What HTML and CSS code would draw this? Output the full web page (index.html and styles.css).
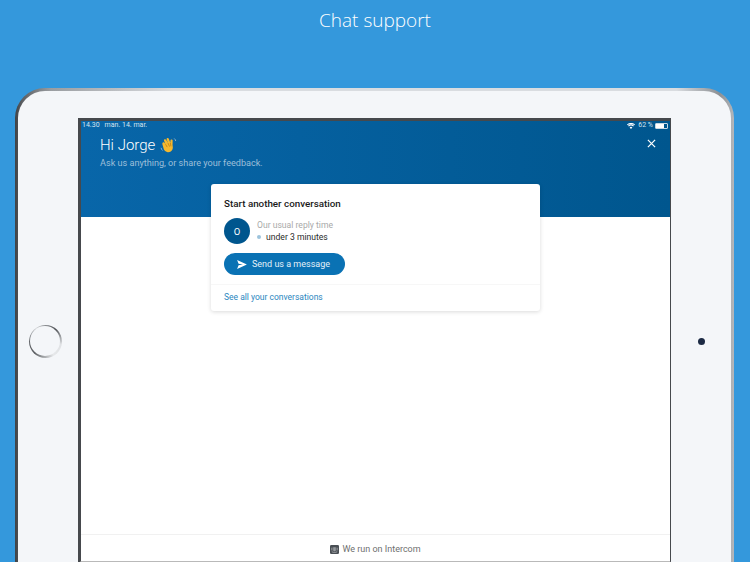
FILE: index.html
```html
<!DOCTYPE html>
<html lang="en">
<head>
    <meta charset="UTF-8">
    <meta name="viewport" content="width=device-width, initial-scale=1.0">
    <title>Chat support</title>
    <link rel="stylesheet" href="styles.css">
</head>
<body>

    <h1 class="page-title">Chat support</h1>

    <div class="device">
        <div class="bezel">
            <div class="side side-left"><div class="home-button"><div class="home-inner"></div></div></div>

            <div class="screen">
                <div class="hero">
                    <div class="status-bar">
                        <span class="status-time">14.30</span>
                        <span>man. 14. mar.</span>
                        <span class="status-right">
                            <svg class="wifi" viewBox="0 0 12 9"><path d="M6 9 3.900 6.600a3 3 0 0 1 4.200 0zM2.800 5.400 1.600 4.100a6.300 6.300 0 0 1 8.800 0L9.200 5.400a4.600 4.600 0 0 0-6.400 0zM.9 3.400 0 2.300a8.600 8.600 0 0 1 12 0l-.9 1.100a7.400 7.400 0 0 0-10.200 0z" fill="#fff"/></svg>
                            <span>62 %</span>
                            <span class="battery"><span class="battery-level"></span></span>
                        </span>
                    </div>
                    <div class="hero-row">
                        <div>
                            <div class="greeting">
                                Hi Jorge
                                <svg class="wave" viewBox="0 0 16 16">
                                    <path d="M2.600 5.200c.5-.5 1.300-.3 1.700.3l.9 1.300L3.900 3.700c-.3-.6-.1-1.200.4-1.500s1.200-.1 1.500.5l1.700 3L6.300 2.300c-.2-.6 0-1.200.6-1.400s1.200.1 1.400.7l1.400 3.700.1-1.700c0-.7.500-1.200 1.100-1.200s1.100.6 1 1.300l-.1 3.900c.1 1.400.6 2.500 0 3.900-.9 2.200-3.100 3.200-5.200 2.600-1.400-.4-2.300-1.400-3-2.600L2.300 7c-.3-.6-.2-1.300.3-1.800z" fill="#f5b82e"/>
                                    <path d="M5.200 6.800l1.600 2.700M7.500 5.700l1.500 3.300M9.700 5.400l.6 3.400" stroke="#b97a12" stroke-width=".7" fill="none"/>
                                    <path d="M13.400 1.400c.8.600 1.300 1.500 1.400 2.400M1 10.200c.2 1 .7 1.900 1.400 2.500" stroke="#b9c9d6" stroke-width=".7" fill="none"/>
                                </svg>
                            </div>
                            <div class="tagline">Ask us anything, or share your feedback.</div>
                        </div>
                        <svg class="close" viewBox="0 0 10 10"><path d="M1 1l8 8M9 1l-8 8" stroke="#fff" stroke-width="1.400"/></svg>
                    </div>
                </div>

                <div class="card">
                    <div class="card-main">
                        <div class="card-title">Start another conversation</div>
                        <div class="reply-row">
                            <div class="avatar">O</div>
                            <div>
                                <div class="reply-label">Our usual reply time</div>
                                <div class="reply-time"><span class="dot"></span>under 3 minutes</div>
                            </div>
                        </div>
                        <div class="send-button">
                            <svg class="send-icon" viewBox="0 0 12 11"><path d="M0 0l12 5.500L0 11l1.800-4.500 5.200-1-5.200-1z" fill="#fff"/></svg>
                            Send us a message
                        </div>
                    </div>
                    <div class="card-link">See all your conversations</div>
                </div>

                <div class="footer">
                    <svg class="intercom" viewBox="0 0 10 10">
                        <rect width="10" height="10" rx="1.500" fill="#4a4f55"/>
                        <path d="M2 3v3M3.700 2.500v4M5 2.500v4.500M6.300 2.500v4M8 3v3M2 7.500c1.800 1 4.200 1 6 0" stroke="#d8dadc" stroke-width=".6" fill="none"/>
                    </svg>
                    We run on Intercom
                </div>
            </div>

            <div class="side"><div class="camera"></div></div>
        </div>
    </div>

</body>
</html>
```

FILE: styles.css
```css
* {
    box-sizing: border-box;
}
html, body {
    height: 562px;
    overflow: hidden;
}
body {
    margin: 0;
    background-color: #3498dc;
    font-family: Roboto, "Liberation Sans", sans-serif;
}
.page-title {
    margin: 0;
    height: 88px;
    padding-top: 7px;
    text-align: center;
    color: white;
    font-family: "Open Sans", sans-serif;
    font-size: 19px;
    line-height: 27px;
    font-weight: 300;
}

/* tablet frame */
.device {
    margin: 0 16px 0 15px;
    padding: 3px;
    border-radius: 30px 30px 0 0;
    background: linear-gradient(to right, #3f4246 0, #5c5f63 1%, #9a9da1 5%, #d9dce0 22%, #d9dce0 92%, #8d9094 98%, #b4b7bb 100%);
}
.bezel {
    display: grid;
    grid-template-columns: 60px 593px 60px;
    padding-top: 27px;
    border-radius: 27px 27px 0 0;
    background-color: #f4f6f9;
}
.side {
    display: flex;
    align-items: center;
    justify-content: center;
}
.side-left {
    padding-right: 6px;
}
.home-button {
    width: 33px;
    height: 33px;
    padding: 1.500px;
    border-radius: 50%;
    background: conic-gradient(#8a8d91 0deg, #4f5256 40deg, #dfe1e4 100deg, #e6e8ea 150deg, #5a5d61 225deg, #63666a 270deg, #d6d8db 325deg, #8a8d91 360deg);
}
.home-inner {
    width: 100%;
    height: 100%;
    border-radius: 50%;
    background-color: #f4f6f9;
}
.camera {
    width: 7px;
    height: 7px;
    border-radius: 50%;
    background-color: #1c2a44;
}

/* app screen */
.screen {
    display: flex;
    flex-direction: column;
    height: 446px;
    border: 3px solid #46494d;
    border-right-width: 1px;
    border-bottom-color: #b9b9b9;
    background-color: white;
}
.hero {
    height: 96px;
    background: linear-gradient(to right, #0866a9, #00568e);
    color: white;
}
.status-bar {
    display: flex;
    align-items: center;
    gap: 5px;
    height: 7px;
    margin-top: 1px;
    padding: 0 2px 0 1px;
    font-size: 7px;
    line-height: 7px;
    color: #d5e3ee;
}
.status-right {
    display: flex;
    align-items: center;
    gap: 2px;
    margin-left: auto;
}
.wifi {
    width: 8px;
    height: 6px;
    margin-right: 1px;
}
.battery {
    display: block;
    width: 13px;
    height: 6px;
    border: 1px solid #c6d6e2;
    border-radius: 1px;
}
.battery-level {
    display: block;
    width: 8px;
    height: 100%;
    background-color: white;
}
.hero-row {
    display: flex;
    justify-content: space-between;
    align-items: flex-start;
    padding: 6px 14px 0 19px;
}
.greeting {
    display: flex;
    align-items: center;
    gap: 5px;
    height: 20px;
    font-size: 15px;
    font-weight: 300;
}
.wave {
    width: 17px;
    height: 17px;
}
.tagline {
    margin-top: 1px;
    font-size: 9.100px;
    line-height: 14px;
    color: #9dbfd9;
}
.close {
    width: 9px;
    height: 9px;
    margin-top: 4px;
}

.card {
    width: 329px;
    margin: -33px auto 0;
    border-radius: 3px;
    background-color: white;
    box-shadow: 0 1px 4px rgba(0, 0, 0, 0.15);
    position: relative;
}
.card-main {
    padding: 13px 13px 9px;
    border-bottom: 1px solid #f7f7f7;
}
.card-title {
    font-size: 9.800px;
    line-height: 13px;
    font-weight: 500;
    color: #1a1a1a;
}
.reply-row {
    display: flex;
    align-items: center;
    gap: 7px;
    margin-top: 8px;
}
.avatar {
    display: flex;
    align-items: center;
    justify-content: center;
    width: 26px;
    height: 26px;
    border-radius: 50%;
    background-color: #00568e;
    color: white;
    font-size: 9.500px;
}
.reply-label {
    font-size: 8.600px;
    line-height: 12px;
    color: #a9a9a9;
}
.reply-time {
    display: flex;
    align-items: center;
    gap: 5px;
    font-size: 8.600px;
    line-height: 12px;
    color: #2a2a2a;
}
.dot {
    width: 4px;
    height: 4px;
    border-radius: 50%;
    background-color: #9cc3dc;
}
.send-button {
    display: flex;
    align-items: center;
    gap: 5px;
    width: 121px;
    height: 22px;
    margin-top: 9px;
    padding-left: 13px;
    border-radius: 11px;
    background-color: #0a72b4;
    color: #e4f0f8;
    font-size: 9px;
}
.send-icon {
    width: 10px;
    height: 9px;
}
.card-link {
    padding: 0 13px;
    height: 26px;
    line-height: 24px;
    font-size: 8.500px;
    color: #2c87c0;
}

.footer {
    display: flex;
    align-items: center;
    justify-content: center;
    gap: 3px;
    height: 27px;
    margin-top: auto;
    padding-top: 2px;
    border-top: 1px solid #f1f1f1;
    font-size: 9px;
    color: #6f6f6f;
}
.intercom {
    width: 9px;
    height: 9px;
}
```
